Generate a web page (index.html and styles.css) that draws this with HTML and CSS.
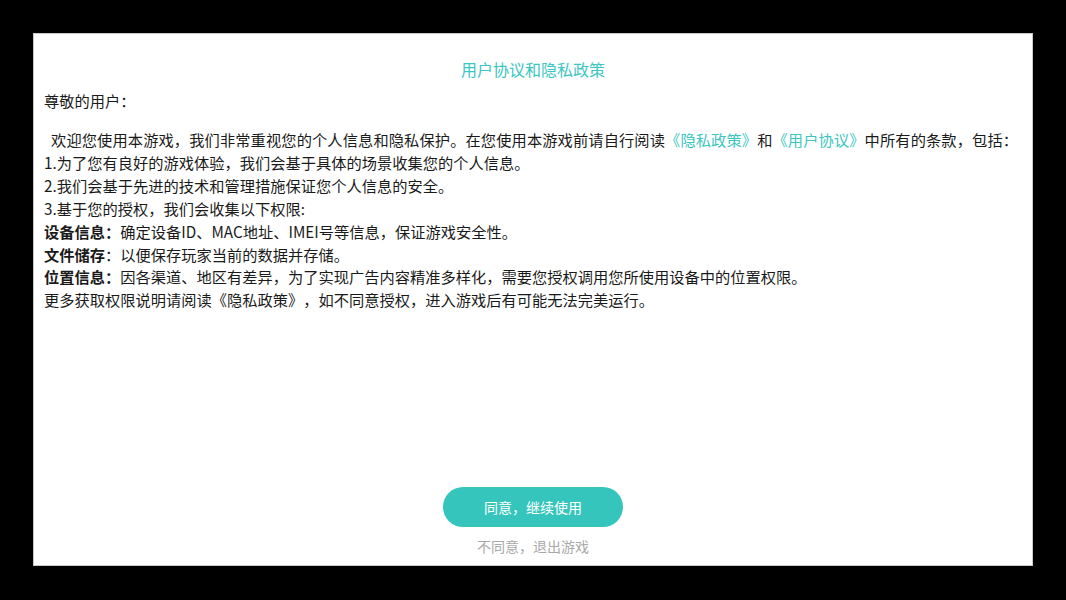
FILE: index.html
```html
<!DOCTYPE html>
<html lang="zh-CN">
<head>
<meta charset="utf-8">
<link rel="stylesheet" href="styles.css">
</head>
<body>
<div class="panel">
  <div class="title">用户协议和隐私政策</div>
  <div class="greeting">尊敬的用户：</div>
  <div class="body">
    <p class="line intro">&nbsp;&nbsp;欢迎您使用本游戏，我们非常重视您的个人信息和隐私保护。在您使用本游戏前请自行阅读<span class="link">《隐私政策》</span>和<span class="link">《用户协议》</span>中所有的条款，包括：</p>
    <p class="line">1.为了您有良好的游戏体验，我们会基于具体的场景收集您的个人信息。</p>
    <p class="line">2.我们会基于先进的技术和管理措施保证您个人信息的安全。</p>
    <p class="line">3.基于您的授权，我们会收集以下权限:</p>
    <p class="line"><b>设备信息：</b>确定设备ID、MAC地址、IMEI号等信息，保证游戏安全性。</p>
    <p class="line"><b>文件储存</b>：以便保存玩家当前的数据并存储。</p>
    <p class="line"><b>位置信息：</b>因各渠道、地区有差异，为了实现广告内容精准多样化，需要您授权调用您所使用设备中的位置权限。</p>
    <p class="line">更多获取权限说明请阅读《隐私政策》，如不同意授权，进入游戏后有可能无法完美运行。</p>
  </div>
  <div class="footer">
    <button class="agree">同意，继续使用</button>
    <div class="refuse">不同意，退出游戏</div>
  </div>
</div>
</body>
</html>
```
FILE: styles.css
```css
html, body {
  margin: 0;
  padding: 0;
  background: #000;
  height: 100%;
}
body {
  font-family: "Noto Sans CJK SC", "Noto Sans", sans-serif;
  color: #1a1a1a;
  font-size: 15.25px;
  padding-top: 33px;
  box-sizing: border-box;
  text-spacing-trim: space-all;
}
.panel {
  box-sizing: border-box;
  width: 1000px;
  height: 533px;
  margin: 0 0 0 33px;
  background: #fff;
  border: 1px solid #c8c8c8;
  padding: 24px 10px 9px 10px;
  display: flex;
  flex-direction: column;
}
.title {
  text-align: center;
  color: #3cc6c0;
  font-size: 16px;
  line-height: 23px;
}
.greeting {
  margin-top: 8px;
  line-height: 23px;
}
.body {
  margin-top: 16px;
}
.line {
  margin: 0;
  line-height: 22.9px;
  white-space: nowrap;
}
.intro {
  letter-spacing: 0.1px;
}
.line b {
  font-weight: 700;
}
.link {
  color: #3cc6c0;
}
.footer {
  margin-top: auto;
  display: flex;
  flex-direction: column;
  align-items: center;
}
.agree {
  width: 180px;
  height: 40px;
  border: none;
  border-radius: 20px;
  background: #36c5bd;
  color: #fff;
  font-family: inherit;
  font-size: 14px;
  padding: 0;
}
.refuse {
  margin-top: 9px;
  color: #a9a9a9;
  font-size: 14px;
  line-height: 20px;
}
```
